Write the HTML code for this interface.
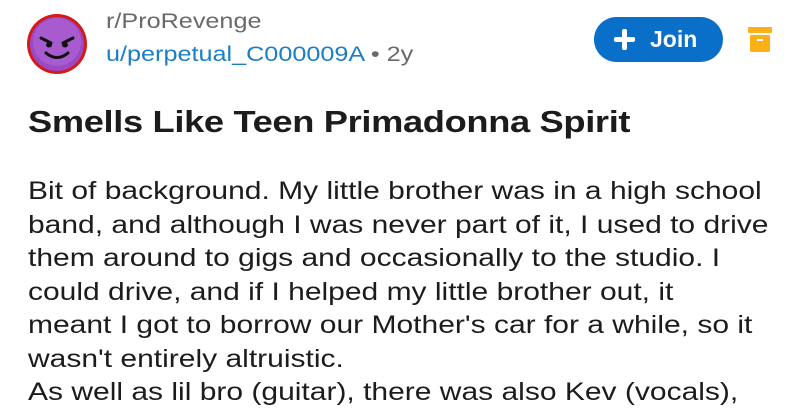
<!DOCTYPE html>
<html><head><meta charset="utf-8"><style>
html,body{margin:0;padding:0;background:#fff;width:800px;height:420px;overflow:hidden;font-family:"Liberation Sans",sans-serif}
.av{position:absolute;left:27px;top:14px;width:60px;height:60px;border-radius:50%;background:#d21a1a}
.sub{position:absolute;left:106px;top:10px;font-size:21px;color:#6a6a6a;transform:scaleX(1.2);transform-origin:0 0;white-space:nowrap}
.usr{position:absolute;left:106px;top:43px;font-size:21px;color:#1a7fc4;transform:scaleX(1.2);transform-origin:0 0;white-space:nowrap}
.usr span{color:#6a6a6a}
.join{position:absolute;left:594px;top:17px;width:129px;height:45px;border-radius:23px;background:#0a6fc8;color:#fff;font-weight:bold;font-size:23px;line-height:45px}
.title{position:absolute;left:28px;top:104px;font-size:31px;font-weight:bold;color:#1c1c1c;white-space:nowrap;letter-spacing:-0.3px;transform:scaleX(1.17);transform-origin:0 0}
.body{position:absolute;left:28px;top:175px;font-size:25px;line-height:33.5px;color:#1c1c1c;white-space:nowrap;transform:scaleX(1.2);transform-origin:0 0}
</style></head><body>
<div class="av"><svg width="60" height="60" viewBox="0 0 60 60"><circle cx="30" cy="30" r="27" fill="#9b49c4"/><circle cx="30" cy="28" r="24" fill="#b067d6" opacity=".6"/><path d="M14 24 L24 29 M46 24 L36 29" stroke="#111" stroke-width="3" stroke-linecap="round"/><ellipse cx="22" cy="31" rx="3" ry="2.5" fill="#111"/><ellipse cx="38" cy="31" rx="3" ry="2.5" fill="#111"/><path d="M19 39 Q30 48 41 39" stroke="#111" stroke-width="3" fill="none" stroke-linecap="round"/></svg></div>
<div class="sub">r/ProRevenge</div>
<div class="usr">u/perpetual_C000009A <span>• 2y</span></div>
<div class="join"><svg style="position:absolute;left:20px;top:12px" width="21" height="21" viewBox="0 0 21 21"><path d="M10.5 2v17M2 10.5h17" stroke="#fff" stroke-width="5" stroke-linecap="round"/></svg><span style="position:absolute;left:56px">Join</span></div>
<svg style="position:absolute;left:748px;top:27px" width="24" height="26" viewBox="0 0 24 26"><rect x="0" y="0" width="24" height="6" rx="1" fill="#fbb017"/><rect x="2" y="8" width="20" height="17" rx="2" fill="#fbb017"/><rect x="9" y="12" width="6" height="2" fill="#fff"/></svg>
<div class="title">Smells Like Teen Primadonna Spirit</div>
<div class="body">
<div>Bit of background. My little brother was in a high school</div>
<div>band, and although I was never part of it, I used to drive</div>
<div>them around to gigs and occasionally to the studio. I</div>
<div>could drive, and if I helped my little brother out, it</div>
<div>meant I got to borrow our Mother's car for a while, so it</div>
<div>wasn't entirely altruistic.</div>
<div>As well as lil bro (guitar), there was also Kev (vocals),</div>
</div>
</body></html>
